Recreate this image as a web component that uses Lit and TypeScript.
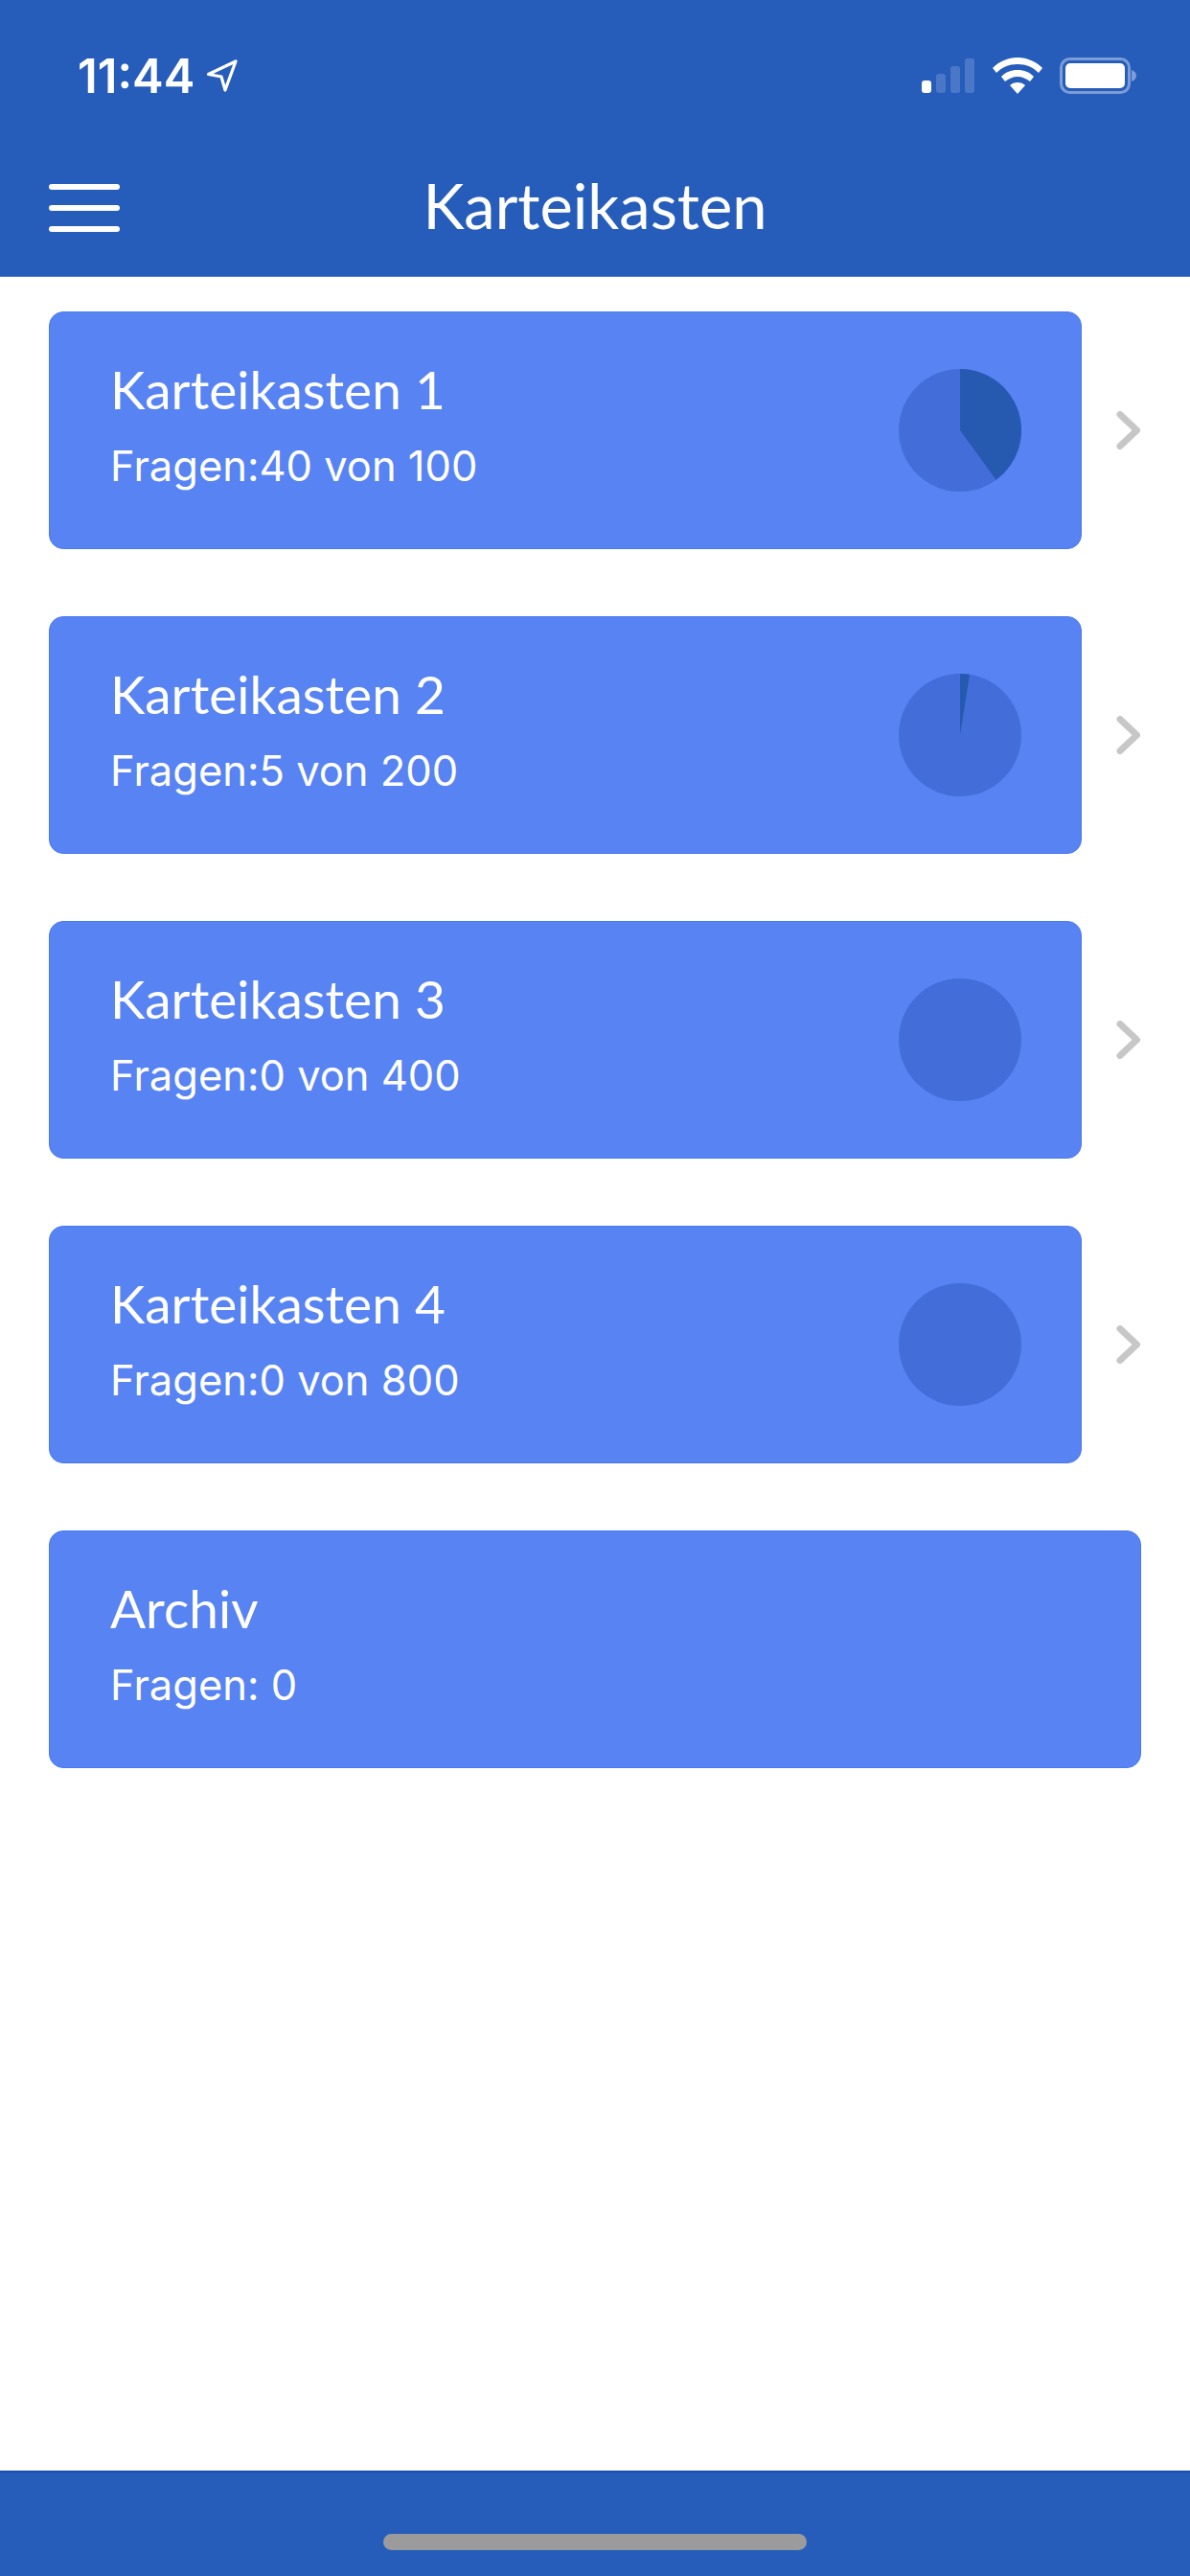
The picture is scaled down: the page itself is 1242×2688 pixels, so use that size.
import { LitElement, html, css, svg } from "lit";
import { customElement } from "lit/decorators.js";

const boxes = [
  { title: "Karteikasten 1", sub: "Fragen:40 von 100", value: 0.4 },
  { title: "Karteikasten 2", sub: "Fragen:5 von 200", value: 0.025 },
  { title: "Karteikasten 3", sub: "Fragen:0 von 400", value: 0 },
  { title: "Karteikasten 4", sub: "Fragen:0 von 800", value: 0 },
];

function slice(v: number) {
  const a = v * 2 * Math.PI;
  const x = 64 + 64 * Math.sin(a);
  const y = 64 - 64 * Math.cos(a);
  return `M64 64V0A64 64 0 ${v > 0.5 ? 1 : 0} 1 ${x.toFixed(2)} ${y.toFixed(2)}Z`;
}

@customElement("app-root")
export class AppRoot extends LitElement {
  static styles = css`
    :host { display: flex; flex-direction: column; width: 1242px; height: 2688px; background: #fff; font-family: "Lato", "Liberation Sans", sans-serif; color: #fff; overflow: hidden; }
    .head { height: 289px; flex: none; box-sizing: border-box; background: #265dbb; border-bottom: 1px solid #4f7cc9; display: flex; flex-direction: column; }
    .status { height: 155px; flex: none; display: flex; justify-content: space-between; padding: 52px 56px 0 81px; box-sizing: border-box; }
    .time { display: flex; align-items: center; height: 54px; gap: 12px; font-family: "Inter", sans-serif; font-weight: 600; font-size: 49px; letter-spacing: 0; }
    .sys { display: flex; align-items: center; height: 54px; gap: 18px; }
    .nav { flex: 1; display: grid; grid-template-columns: 1fr auto 1fr; align-items: center; padding: 0 51px 4px; margin-top: -12px; }
    .burger { display: flex; flex-direction: column; gap: 16px; width: 74px; padding-top: 6px; }
    .burger i { display: block; height: 6px; border-radius: 3px; background: #fff; }
    .title { font-size: 65px; line-height: 76px; }
    main { flex: 1; display: flex; flex-direction: column; gap: 70px; padding: 36px 51px 0; }
    .row { display: flex; align-items: center; }
    .card { box-sizing: border-box; height: 248px; width: 1078px; flex: none; background: #5783f3; border: 1px solid #4b7aef; border-radius: 15px; display: flex; align-items: center; justify-content: space-between; padding: 0 62px 14px 63px; }
    .card.wide { width: 1140px; }
    .card svg { margin-bottom: -14px; }
    .card h2 { margin: 0; font-weight: 400; font-size: 55px; line-height: 68px; }
    .card p { margin: 20px 0 0; font-family: "Inter", sans-serif; font-size: 43.5px; line-height: 52px; font-weight: 400; }
    .chev { margin-left: 36px; display: block; }
    .foot { height: 110px; flex: none; box-sizing: border-box; background: #265dbb; border-top: 2px solid #1a4db0; display: flex; justify-content: center; padding-top: 64px; }
    .foot i { display: block; width: 442px; height: 17px; border-radius: 9px; background: #9b9b9b; }
    svg { display: block; }
  `;

  private pie(v: number) {
    return html`<svg width="128" height="128" viewBox="0 0 128 128">
      <circle cx="64" cy="64" r="64" fill="#436dd8"></circle>
      ${v > 0 ? svg`<path d=${slice(v)} fill="#265ab0"></path>` : ""}
    </svg>`;
  }

  render() {
    return html`
      <div class="head">
        <div class="status">
          <div class="time">11:44
            <svg width="34" height="36" viewBox="0 0 34 36"><path d="M2.5 16.5 31 3 20 33 16 19Z" fill="none" stroke="#fff" stroke-width="3.2" stroke-linejoin="round"></path></svg>
          </div>
          <div class="sys">
            <svg width="56" height="38" viewBox="0 0 56 38">
              <rect x="0" y="24" width="10" height="13" rx="3" fill="#fff"></rect>
              <rect x="15" y="17" width="10" height="20" rx="3" fill="#fff" opacity=".17"></rect>
              <rect x="30" y="9" width="10" height="28" rx="3" fill="#fff" opacity=".17"></rect>
              <rect x="45" y="1" width="10" height="36" rx="3" fill="#fff" opacity=".17"></rect>
            </svg>
            <svg width="52" height="38" viewBox="0 0 52 38">
              <path d="M26 0C16 0 7 4 0 11l4 5c6-6 13-9 22-9s16 3 22 9l4-5C45 4 36 0 26 0Z" fill="#fff"></path>
              <path d="M26 13c-7 0-12 2-17 7l4 5c4-3 8-5 13-5s9 2 13 5l4-5c-5-5-10-7-17-7Z" fill="#fff"></path>
              <path d="M26 26c-3 0-6 1-8 3l8 9 8-9c-2-2-5-3-8-3Z" fill="#fff"></path>
            </svg>
            <svg width="80" height="38" viewBox="0 0 80 38">
              <rect x="1.5" y="1.5" width="71" height="35" rx="9" fill="none" stroke="#fff" stroke-opacity=".4" stroke-width="3"></rect>
              <rect x="6" y="6" width="62" height="26" rx="5" fill="#fff"></rect>
              <path d="M75 13c3 1 5 3 5 6s-2 5-5 6Z" fill="#fff" fill-opacity=".4"></path>
            </svg>
          </div>
        </div>
        <div class="nav">
          <div class="burger"><i></i><i></i><i></i></div>
          <div class="title">Karteikasten</div>
          <div></div>
        </div>
      </div>
      <main>
        ${boxes.map(
          (b) => html`<div class="row">
            <div class="card">
              <div><h2>${b.title}</h2><p>${b.sub}</p></div>
              ${this.pie(b.value)}
            </div>
            <svg class="chev" width="26" height="40" viewBox="0 0 26 40"><path d="M4 3.5 21.5 20 4 36.5" fill="none" stroke="#c7c7c7" stroke-width="7" stroke-linecap="round" stroke-linejoin="round"></path></svg>
          </div>`
        )}
        <div class="row">
          <div class="card wide"><div><h2>Archiv</h2><p>Fragen: 0</p></div></div>
        </div>
      </main>
      <div class="foot"><i></i></div>
    `;
  }
}
